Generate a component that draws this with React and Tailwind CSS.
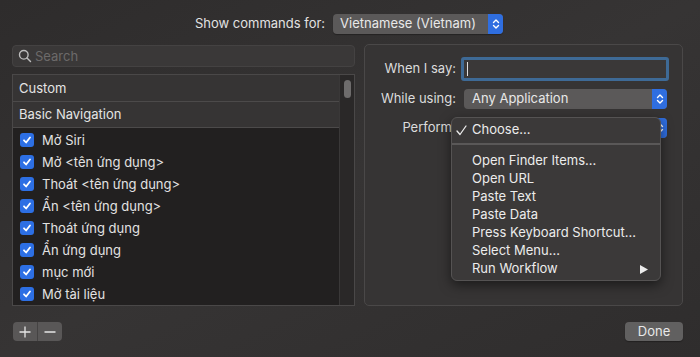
import React from "react";

function Stepper({ className = "" }) {
  return (
    <div className={"flex items-center justify-center bg-[#2f6ee0] rounded-r-[4px] " + className}>
      <svg width="8" height="12" viewBox="0 0 8 12" fill="none" stroke="white" strokeWidth="1.4" strokeLinecap="round" strokeLinejoin="round">
        <path d="M1.5 4.5 L4 2 L6.5 4.5" />
        <path d="M1.5 7.5 L4 10 L6.5 7.5" />
      </svg>
    </div>
  );
}

function Check() {
  return (
    <div className="w-[14px] h-[14px] rounded-[3px] bg-[#2d6fe4] flex items-center justify-center shrink-0">
      <svg width="10" height="10" viewBox="0 0 10 10" fill="none" stroke="white" strokeWidth="1.8" strokeLinecap="round" strokeLinejoin="round">
        <path d="M2 5.3 L4.1 7.5 L8 2.5" />
      </svg>
    </div>
  );
}

const items = [
  "Mở Siri",
  "Mở <tên ứng dụng>",
  "Thoát <tên ứng dụng>",
  "Ẩn <tên ứng dụng>",
  "Thoát ứng dụng",
  "Ẩn ứng dụng",
  "mục mới",
  "Mở tài liệu",
];

const menuItems = [
  "Open Finder Items...",
  "Open URL",
  "Paste Text",
  "Paste Data",
  "Press Keyboard Shortcut...",
  "Select Menu...",
];

export default function App() {
  return (
    <div
      className="w-[700px] h-[357px] overflow-hidden bg-gradient-to-br from-[#2e2c2c] via-[#363434] to-[#2f2d2d] text-[#dedede] text-[13px] flex flex-col"
      style={{ fontFamily: "Inter, 'Noto Sans', sans-serif" }}
    >
      {/* top */}
      <div className="flex items-center justify-center gap-[8px] pt-[14px] h-[34px] pr-[2px]">
        <span className="text-[#e2e2e2]">Show commands for:</span>
        <div className="flex h-[20px] w-[170px] rounded-[4px] bg-[#5b5959] shadow-[0_1px_1px_rgba(0,0,0,0.3)]">
          <div className="flex-1 flex items-center pl-[7px] text-[#e8e8e8]">Vietnamese (Vietnam)</div>
          <Stepper className="w-[15px]" />
        </div>
      </div>

      {/* main */}
      <div className="flex gap-[9px] pl-[12px] mt-[10px]">
        {/* left */}
        <div className="w-[343px] flex flex-col">
          <div className="h-[22px] mt-[1px] rounded-[4px] bg-[#3a3838] border border-[#444242] flex items-center pl-[5px] gap-[3px]">
            <svg width="14" height="14" viewBox="0 0 14 14" fill="none" stroke="#bdbdbd" strokeWidth="1.4" strokeLinecap="round">
              <circle cx="5.8" cy="5.8" r="4.3" />
              <path d="M9 9 L12.5 12.5" />
            </svg>
            <span className="text-[#6c6a6a] pt-[1px]">Search</span>
          </div>
          <div className="mt-[7px] h-[232px] border border-[#4a4848] bg-[#222020] flex">
            <div className="flex-1 flex flex-col">
              <div className="h-[27px] bg-[#363434] border-b border-[#4c4a4a] flex items-center pl-[6px] pt-[1px] text-[#e4e4e4]">Custom</div>
              <div className="h-[27px] bg-[#363434] border-b border-[#4c4a4a] flex items-center pl-[6px] pt-[1px] text-[#e4e4e4]">Basic Navigation</div>
              <div className="pt-[1px]">
                {items.map((t) => (
                  <div key={t} className="h-[22px] flex items-center pl-[7px] gap-[8px] text-[#e2e2e2]">
                    <Check />
                    <span className="pt-[1px]">{t}</span>
                  </div>
                ))}
              </div>
            </div>
            <div className="w-[15px] bg-[#2a2828] border-l border-[#3a3838] flex justify-center pt-[5px]">
              <div className="w-[7px] h-[18px] rounded-full bg-[#6e6c6c]" />
            </div>
          </div>
        </div>

        {/* right panel */}
        <div className="relative w-[319px] h-[262px] rounded-[5px] border border-[#4a4848] bg-[#363434]">
          <div className="grid grid-cols-[91px_1fr] items-center gap-y-[8px] pt-[12px]">
            <div className="text-right text-[#dcdcdc]">When I say:</div>
            <div className="ml-[5px] mr-[13px] h-[24px] rounded-[3px] border-[3px] border-[#3e6a96] bg-[#3a3838] flex items-center pl-[3px]">
              <div className="w-[1px] h-[14px] bg-[#e0e0e0]" />
            </div>
            <div className="text-right text-[#dcdcdc]">While using:</div>
            <div className="ml-[8px] mr-[15px] h-[20px] rounded-[4px] bg-[#5b5959] flex">
              <div className="flex-1 flex items-center pl-[8px] text-[#e8e8e8]">Any Application</div>
              <Stepper className="w-[15px]" />
            </div>
            <div className="text-right text-[#dcdcdc] mt-[1px] pr-[4px]">Perform</div>
            <div className="ml-[8px] mr-[15px] h-[20px] rounded-[4px] bg-[#5b5959] flex mt-[1px]">
              <div className="flex-1" />
              <Stepper className="w-[15px]" />
            </div>
          </div>

          {/* menu */}
          <div className="absolute left-[86px] top-[72px] w-[210px] h-[164px] rounded-[6px] bg-[#3b3939] border border-[#555353] shadow-[0_4px_12px_rgba(0,0,0,0.5)] text-[#ececec]">
            <div className="h-[24px] flex items-center pl-[4px]">
              <span className="w-[16px] flex items-center">
                <svg width="11" height="11" viewBox="0 0 11 11" fill="none" stroke="#ececec" strokeWidth="1.3" strokeLinecap="round" strokeLinejoin="round">
                  <path d="M1 6 L4 9.5 L10 1" />
                </svg>
              </span>
              <span>Choose...</span>
            </div>
            <div className="h-[2px] bg-[#5a5858] mt-[1px]" />
            <div className="pt-[7px]">
              {menuItems.map((m) => (
                <div key={m} className="h-[18px] flex items-center pl-[20px]">{m}</div>
              ))}
              <div className="h-[18px] flex items-center pl-[20px] pr-[12px] justify-between">
                <span>Run Workflow</span>
                <svg width="8" height="9" viewBox="0 0 8 9"><path d="M0 0 L8 4.5 L0 9 Z" fill="#ececec" /></svg>
              </div>
            </div>
          </div>
        </div>
      </div>

      {/* bottom */}
      <div className="flex items-center justify-between pl-[13px] pr-[17px] mt-[16px]">
        <div className="flex h-[19px] rounded-[4px] bg-[#595757] overflow-hidden">
          <div className="w-[25px] flex items-center justify-center border-r border-[#454343]">
            <svg width="12" height="12" viewBox="0 0 12 12" stroke="#e6e6e6" strokeWidth="1.3"><path d="M6 0.5 V11.5 M0.5 6 H11.5" /></svg>
          </div>
          <div className="w-[24px] flex items-center justify-center">
            <svg width="12" height="12" viewBox="0 0 12 12" stroke="#e6e6e6" strokeWidth="1.3"><path d="M0.5 6 H11.5" /></svg>
          </div>
        </div>
        <div className="h-[19px] w-[58px] rounded-[4px] bg-[#616060] flex items-center justify-center text-[#e8e8e8] shadow-[0_1px_1px_rgba(0,0,0,0.3)]">
          Done
        </div>
      </div>
    </div>
  );
}
